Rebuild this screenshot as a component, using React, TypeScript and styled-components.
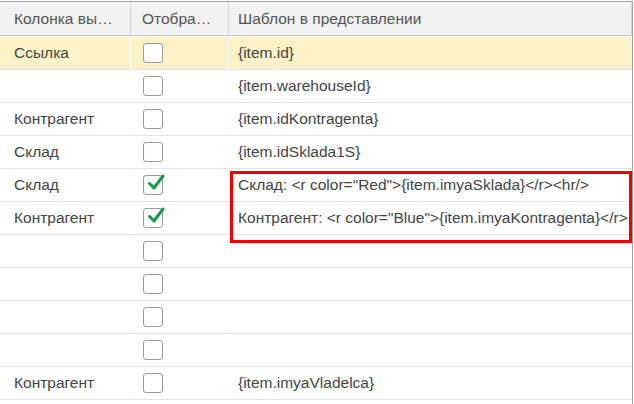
import styled, { createGlobalStyle } from "styled-components"

const GlobalStyle = createGlobalStyle`
  html, body {
    margin: 0;
    padding: 0;
    background: #fff;
  }
  body {
    font-family: "Liberation Sans", Arial, sans-serif;
  }
`

const Page = styled.div`
  width: 634px;
  height: 404px;
  padding-top: 1px;
  box-sizing: border-box;
  background: #fff;
  overflow: hidden;
`

const Table = styled.div`
  position: relative;
  width: 633px;
  border-top: 1px solid #a3a3a3;
  border-right: 1px solid #a3a3a3;
  box-sizing: border-box;
  min-height: 403px;
`

const Grid = styled.div`
  display: grid;
  grid-template-columns: 131px 98px 1fr;
`

const HeaderCell = styled.div<{ $pad: number }>`
  height: 33px;
  display: flex;
  align-items: center;
  padding-left: ${(p) => p.$pad}px;
  padding-right: 12px;
  background: #f2f2f2;
  border-right: 1px solid #d6d6d6;
  border-bottom: 1px solid #c4c4c4;
  color: #555;
  font-size: 15.5px;
  white-space: nowrap;
  overflow: hidden;
  min-width: 0;
  &:last-child {
    border-right: none;
  }
`

const HeaderText = styled.span`
  overflow: hidden;
  text-overflow: ellipsis;
`

const Gap = styled.div`
  grid-column: 1 / -1;
  height: 1px;
  background: #fff;
`

const Cell = styled.div<{ $pad: number; $selected?: boolean }>`
  height: 32px;
  display: flex;
  align-items: center;
  padding-left: ${(p) => p.$pad}px;
  background: ${(p) => (p.$selected ? "#fdf1c8" : "#fff")};
  border-right: 1px solid #fff;
  border-bottom: 1px solid #e3e3e3;
  color: #444;
  font-size: 15.5px;
  white-space: nowrap;
  overflow: hidden;
  min-width: 0;
  &:nth-child(3n + 1) {
    border-right: none;
  }
`

const Box = styled.span`
  position: relative;
  width: 18px;
  height: 18px;
  border: 1px solid #9a9a9a;
  border-radius: 3px;
  background: #fff;
  box-sizing: content-box;
`

const Tick = styled.svg`
  position: absolute;
  left: 3px;
  top: -3px;
`

const Highlight = styled.div`
  position: absolute;
  left: 230px;
  top: 169px;
  width: 402px;
  height: 72px;
  border: 3px solid #f20000;
  box-sizing: border-box;
  pointer-events: none;
`

type Row = { name: string; checked: boolean; tpl: string; selected?: boolean }

const rows: Row[] = [
  { name: "Ссылка", checked: false, tpl: "{item.id}", selected: true },
  { name: "", checked: false, tpl: "{item.warehouseId}" },
  { name: "Контрагент", checked: false, tpl: "{item.idKontragenta}" },
  { name: "Склад", checked: false, tpl: "{item.idSklada1S}" },
  { name: "Склад", checked: true, tpl: 'Склад: <r color="Red">{item.imyaSklada}</r><hr/>' },
  { name: "Контрагент", checked: true, tpl: 'Контрагент: <r color="Blue">{item.imyaKontragenta}</r>' },
  { name: "", checked: false, tpl: "" },
  { name: "", checked: false, tpl: "" },
  { name: "", checked: false, tpl: "" },
  { name: "", checked: false, tpl: "" },
  { name: "Контрагент", checked: false, tpl: "{item.imyaVladelca}" },
]

function Checkbox({ checked }: { checked: boolean }) {
  return (
    <Box>
      {checked && (
        <Tick width="18" height="18" viewBox="0 0 18 18">
          <path
            d="M2.5 10.5 L7 15 L16 3"
            fill="none"
            stroke="#179b45"
            strokeWidth="3"
            strokeLinecap="round"
            strokeLinejoin="round"
          />
        </Tick>
      )}
    </Box>
  )
}

export default function App() {
  return (
    <>
      <GlobalStyle />
      <Page>
        <Table>
          <Grid>
            <HeaderCell $pad={14}>
              <HeaderText>Колонка выборки</HeaderText>
            </HeaderCell>
            <HeaderCell $pad={11}>
              <HeaderText>Отображать</HeaderText>
            </HeaderCell>
            <HeaderCell $pad={9}>
              <HeaderText>Шаблон в представлении</HeaderText>
            </HeaderCell>
            <Gap />
            {rows.map((r, i) => [
              <Cell key={`n${i}`} $pad={14} $selected={r.selected}>
                {r.name}
              </Cell>,
              <Cell key={`c${i}`} $pad={12} $selected={r.selected}>
                <Checkbox checked={r.checked} />
              </Cell>,
              <Cell key={`t${i}`} $pad={9} $selected={r.selected}>
                {r.tpl}
              </Cell>,
            ])}
          </Grid>
          <Highlight />
        </Table>
      </Page>
    </>
  )
}
